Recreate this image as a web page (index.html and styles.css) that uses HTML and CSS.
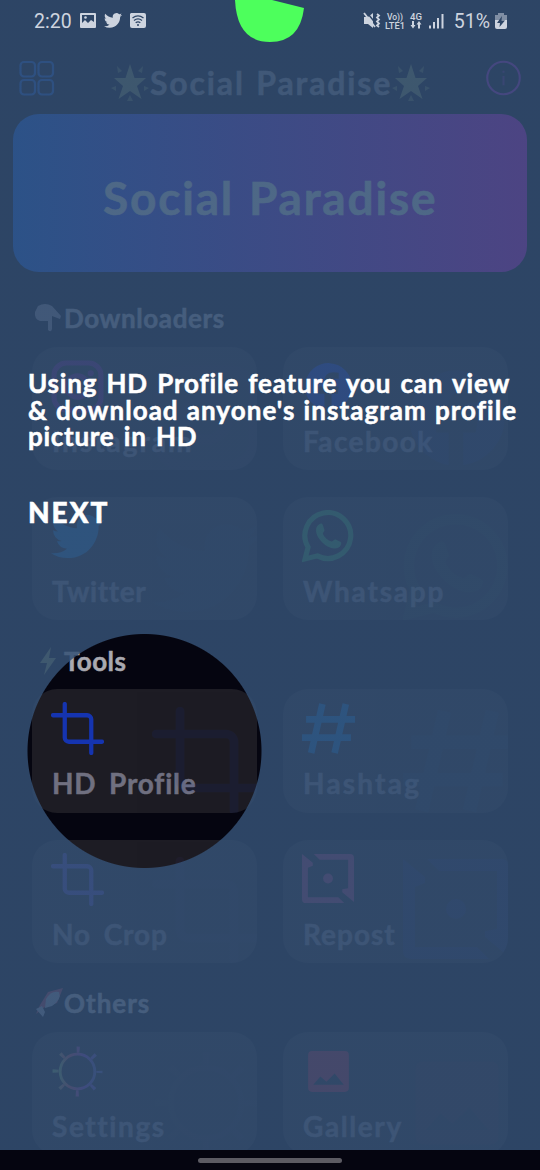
FILE: index.html
```html
<!DOCTYPE html>
<html lang="en">
<head>
<meta charset="utf-8">
<title>Social Paradise</title>
<link rel="stylesheet" href="styles.css">
</head>
<body>
<svg class="defs" width="0" height="0">
  <defs>
    <linearGradient id="rainbow" x1="0" x2="1"><stop offset="0" stop-color="#6e9e60"/><stop offset=".25" stop-color="#b04050"/><stop offset=".7" stop-color="#7830b8"/><stop offset="1" stop-color="#5050a0"/></linearGradient>
    <symbol id="crop" viewBox="0 0 52 52"><path d="M13.500 2V35a4 4 0 0 0 4 4H50M2 13H35.500a4 4 0 0 1 4 4V50" fill="none" stroke="currentColor" stroke-width="4.200" stroke-linecap="round"/></symbol>
    <symbol id="insta" viewBox="0 0 52 52"><g fill="none" stroke="currentColor" stroke-width="5"><rect x="3" y="3" width="46" height="46" rx="12"/><circle cx="26" cy="26" r="10.500"/></g><circle cx="39" cy="13" r="3" fill="currentColor"/></symbol>
    <symbol id="fb" viewBox="0 0 52 52"><path fill="currentColor" d="M49 26a23 23 0 1 0-27 22.700V33h-6v-7h6v-5c0-6 3.500-9 9-9l5 .5v6h-3c-3 0-4 1.500-4 4V26h7l-1 7h-6v15.700A23 23 0 0 0 49 26Z"/></symbol>
    <symbol id="bird" viewBox="0 0 24 24"><path fill="currentColor" d="M23.953 4.57a10 10 0 01-2.825.775 4.958 4.958 0 002.163-2.723c-.951.555-2.005.959-3.127 1.184a4.92 4.92 0 00-8.384 4.482C7.69 8.095 4.067 6.13 1.64 3.162a4.822 4.822 0 00-.666 2.475c0 1.71.87 3.213 2.188 4.096a4.904 4.904 0 01-2.228-.616v.06a4.923 4.923 0 003.946 4.827 4.996 4.996 0 01-2.212.085 4.936 4.936 0 004.604 3.417 9.867 9.867 0 01-6.102 2.105c-.39 0-.779-.023-1.17-.067a13.995 13.995 0 007.557 2.209c9.053 0 13.998-7.496 13.998-13.985 0-.21 0-.42-.015-.63A9.935 9.935 0 0024 4.59z"/></symbol>
    <symbol id="wa" viewBox="0 0 52 52"><path d="M3 48L6 36.500A22.500 22.500 0 1 1 15 45Z" fill="none" stroke="currentColor" stroke-width="5"/><path fill="currentColor" d="M17 14c1.500-1.500 3-1 3.500 1l1.500 4.500c.5 1.500-2 2.500-1.500 4 1.500 3.500 5 6.500 8.500 7.500 1.500 0 2.500-2.500 4-2l5 2.500c1.500 1-.5 5-2.500 5.500-5 2-11-.5-15.500-5-4.500-4.500-7-9.500-6-14 .5-2 1.500-3 3-4Z"/></symbol>
    <symbol id="hash" viewBox="0 0 52 52"><path d="M20 2 9 50M43 2 32 50M4 17H52M0 35H48" fill="none" stroke="currentColor" stroke-width="6.500"/></symbol>
    <symbol id="repost" viewBox="0 0 54 52"><path fill="currentColor" d="M0 0 11 9V12L6 14V44H37L43 50H4Q0 50 0 46ZM12 0H49Q53 0 53 4V49L41 39V36L47 35V6H18Z"/><circle cx="26.500" cy="25" r="5" fill="currentColor"/></symbol>
    <symbol id="gear" viewBox="0 0 52 52"><g fill="none" stroke="url(#rainbow)"><circle cx="26" cy="26" r="17" stroke-width="2.800"/><circle cx="26" cy="26" r="21.500" stroke-width="6" stroke-dasharray="3 13.886" stroke-dashoffset="1.500"/></g></symbol>
    <symbol id="photo" viewBox="0 0 52 52"><path fill="currentColor" fill-rule="evenodd" d="M10 6H42Q46 6 46 10V42Q46 46 42 46H10Q6 46 6 42V10Q6 6 10 6ZM11 39H41L32 28L24 36L18 31Z"/></symbol>
    <symbol id="star" viewBox="0 0 38 38"><g fill="currentColor"><path d="M19 0 23.500 14H35L26 22 30.500 35 19 27 7.500 35 12 22 3 14H14.500Z"/><path opacity=".7" d="M6 2 11 7 7 9ZM32 2 27 7 31 9ZM0 24 5 22 5 27ZM38 24 33 22 33 27ZM19 31 22 37H16Z"/></g></symbol>
  </defs>
</svg>
<div class="screen">
  <header class="appbar">
    <svg class="menu" viewBox="0 0 36 36"><g fill="none" stroke="currentColor" stroke-width="2.200"><rect x="1.500" y="2" width="14.500" height="14.500" rx="3.500"/><rect x="19.500" y="2" width="14.500" height="14.500" rx="3.500"/><rect x="1.500" y="20" width="14.500" height="14.500" rx="3.500"/><rect x="19.500" y="20" width="14.500" height="14.500" rx="3.500"/></g></svg>
    <div class="brand"><svg><use href="#star"/></svg><span>Social Paradise</span><svg><use href="#star"/></svg></div>
    <svg class="info" viewBox="0 0 34 34"><g fill="none" stroke="currentColor" stroke-width="2"><circle cx="17" cy="17" r="15.800"/><path d="M17 15V24M17 10V12" opacity=".5"/></g></svg>
  </header>
  <section class="banner"><span>Social Paradise</span></section>
  <h2 class="title down"><svg viewBox="0 0 26 28"><path fill="#8a8490" d="M3 2Q10-2 17 2L26 12 25 15 17 12V25Q16 29 13 26V17H5Q-1 15 0 8Z"/></svg><span>Downloaders</span></h2>
  <div class="grid">
    <article class="card insta"><svg class="icon"><use href="#insta"/></svg><span class="label">Instagram</span><svg class="mark"><use href="#insta"/></svg></article>
    <article class="card fb"><svg class="icon"><use href="#fb"/></svg><span class="label">Facebook</span><svg class="mark"><use href="#fb"/></svg></article>
    <article class="card bird"><svg class="icon"><use href="#bird"/></svg><span class="label">Twitter</span><svg class="mark"><use href="#bird"/></svg></article>
    <article class="card wa"><svg class="icon"><use href="#wa"/></svg><span class="label">Whatsapp</span><svg class="mark"><use href="#wa"/></svg></article>
  </div>
  <h2 class="title tools"><svg viewBox="0 0 26 28"><path fill="#7b8752" d="M16 0 5 16H12L9 28 21 11H14Z"/></svg><span>Tools</span></h2>
  <div class="grid">
    <article class="card hd"><svg class="icon"><use href="#crop"/></svg><span class="label">HD Profile</span><svg class="mark"><use href="#crop"/></svg></article>
    <article class="card hash"><svg class="icon"><use href="#hash"/></svg><span class="label">Hashtag</span><svg class="mark"><use href="#hash"/></svg></article>
    <article class="card nocrop"><svg class="icon"><use href="#crop"/></svg><span class="label">No Crop</span><svg class="mark"><use href="#crop"/></svg></article>
    <article class="card repost"><svg class="icon"><use href="#repost"/></svg><span class="label">Repost</span><svg class="mark"><use href="#repost"/></svg></article>
  </div>
  <h2 class="title others"><svg viewBox="0 0 26 28"><path fill="#a03048" d="M13 3 28-1 22 14 10 18 1 25 5 16Z"/><path fill="#8e96a8" d="M11 10Q16 1 24 3 27 10 17 17L10 19ZM1 20 7 17 10 23 8 28Z"/></svg><span>Others</span></h2>
  <div class="grid">
    <article class="card gear"><svg class="icon"><use href="#gear"/></svg><span class="label">Settings</span><svg class="mark"><use href="#gear"/></svg></article>
    <article class="card photo"><svg class="icon"><use href="#photo"/></svg><span class="label">Gallery</span><svg class="mark"><use href="#photo"/></svg></article>
  </div>
  <div class="spotlight"></div>
  <div class="coach">
    <p><span class="l1">Using HD Profile feature you can view</span><span class="l2">&amp; download anyone's instagram profile</span><span class="l3">picture in HD</span></p>
    <b class="next">NEXT</b>
  </div>
  <div class="status">
    <span class="clock">2:20</span>
    <svg class="s-left" viewBox="0 0 70 18"><path fill="currentColor" fill-rule="evenodd" d="M1 1H15Q16 1 16 2V15Q16 16 15 16H1Q0 16 0 15V2Q0 1 1 1ZM2 3V11L5 8 8 11 11 8 14 10V3ZM51 1H64Q66 1 66 3V14Q66 16 64 16H52Q50 16 50 14V2Z"/><circle cx="5.500" cy="5.500" r="1.300" fill="currentColor"/><svg x="24" y="-.5" width="18" height="18"><use href="#bird"/></svg><g fill="none" stroke="#2d4565" stroke-width="1.300"><path d="M52.500 6Q58 1.800 63.500 6M54 8.500Q58 5.200 62 8.500M55.700 10.800Q58 9 60.300 10.800"/></g><circle cx="58" cy="13" r="1" fill="#2d4565"/></svg>
    <svg class="s-right" viewBox="0 0 82 20"><path fill="currentColor" d="M1 6H5L10 2V17L5 13H1Z"/><path d="M3.500 1 14 14" stroke="#2d4565" stroke-width="1.500"/><path d="M1 2 12 16" stroke="currentColor" stroke-width="1.800"/><path d="M14 3l2 1.500-2 2 2 2-2 2 2 2-2 2 2 1.500" stroke="currentColor" stroke-width="1.800" fill="none"/><g fill="currentColor"><text x="24" y="8.500" textLength="16" lengthAdjust="spacingAndGlyphs">Vo))</text><text x="22" y="17.500" textLength="20" lengthAdjust="spacingAndGlyphs">LTE1</text><text x="47" y="8.500" textLength="12" lengthAdjust="spacingAndGlyphs">4G</text><path d="M49 10h2v4h1.500L50 17.500 47.500 14H49ZM55 17.500h2v-4h1.500L56 10 53.500 13.500H55ZM66 14.500h2v3h-2ZM70 11h2v6.500h-2ZM74 7h2v10.500h-2ZM78.500 3h2v14.500h-2Z"/></g></svg>
    <span class="pct">51%</span>
    <svg class="batt" viewBox="0 0 12 18"><path fill="#7f8ea4" d="M3 1H9V3H12V9H0V3H3Z"/><path fill="currentColor" d="M0 8H12V15Q12 17 10 17H2Q0 17 0 15Z"/><path fill="#2d4565" d="M7 4 2 11H5L4.500 15 10 8.500H6.500Z"/></svg>
  </div>
  <svg class="blob" viewBox="0 0 70 43"><path fill="#4dff5c" d="M0 0H37L69 8Q65 42 35 42 2 42 0 0Z"/></svg>
  <footer class="navbar"><i></i></footer>
</div>
</body>
</html>
```
FILE: styles.css
```css
* { box-sizing: border-box; }
body { margin: 0; background: #050510; font-family: Lato, "Open Sans", sans-serif; font-weight: 700; }
svg { display: block; flex: none; }
.defs { position: absolute; }
.screen { position: relative; width: 540px; height: 1170px; overflow: hidden; background: #050510; color: #a9a9b0; }
.brand span, .banner span, .title span, .label, .coach { -webkit-text-stroke: .5px currentColor; }
.appbar { height: 114px; padding: 60px 19px 0; display: flex; justify-content: space-between; align-items: flex-start; }
.menu { width: 36px; height: 36px; color: #0c50c8; }
.info { width: 35px; height: 36px; color: #a414c0; }
.brand { display: flex; align-items: center; gap: 1px; height: 46px; font-size: 32px; color: #85858d; letter-spacing: 1.850px; word-spacing: 2px; }
.brand svg { width: 38px; height: 38px; color: #74804c; }
.brand span { width: 241px; white-space: nowrap; line-height: 38px; padding-bottom: 1px; }
.banner { margin: 0 13px; height: 158px; border-radius: 26px; background: linear-gradient(90deg, #005df5, #d800d8); display: flex; align-items: center; justify-content: center; color: #e0f0f0; font-size: 46px; padding-top: 8px; letter-spacing: 1.800px; word-spacing: 2px; }
.banner span { width: 334px; white-space: nowrap; }
.title { margin: 0; padding-left: 35px; height: 75px; display: flex; align-items: center; padding-top: 16px; gap: 3px; font-size: 26px; }
.title svg { width: 26px; height: 28px; overflow: visible; }
.title.down { letter-spacing: .6px; }
.title.tools { height: 69px; padding-top: 12px; letter-spacing: .4px; }
.title.others { height: 69.500px; padding-top: 11px; letter-spacing: 1px; }
.grid { display: grid; grid-template-columns: 225px 225px; gap: 27px 26px; padding-left: 32px; }
.card { position: relative; height: 123.200px; border-radius: 25px; overflow: hidden; background: #1d1c24; padding: 13px 0 0 19px; display: flex; flex-direction: column; gap: 11px; }
.icon { width: 53px; height: 53px; }
.label { font-size: 28px; line-height: 34px; color: #707080; padding-left: 1px; white-space: nowrap; }
.mark { position: absolute; right: -3px; bottom: -2px; width: 108px; height: 108px; opacity: .09; }
.insta { color: #601078; }
.insta .label { letter-spacing: 2px; }
.insta .mark { opacity: .04; }
.fb { color: #1030c0; }
.fb .label { letter-spacing: 1.400px; }
.fb .mark { opacity: .15; }
.bird { color: #1268b0; }
.bird .label { letter-spacing: .6px; }
.bird .mark { opacity: .05; }
.wa { color: #2e9550; }
.wa .label { letter-spacing: 1.800px; }
.hd { color: #1534b0; }
.hd .label { letter-spacing: .8px; word-spacing: 5px; }
.hash { color: #0768b8; }
.hash .label { letter-spacing: 2.200px; }
.nocrop { color: #4a40ad; }
.nocrop .label { letter-spacing: .9px; word-spacing: 5px; }
.nocrop .mark { opacity: .05; }
.repost { color: #983468; }
.repost .label { letter-spacing: 1px; }
.repost .mark { color: #1534e0; opacity: .15; }
.gear .label { letter-spacing: 1.600px; }
.gear .mark { opacity: .04; }
.photo { color: #a01c34; }
.photo .label { letter-spacing: 1.600px; }
.spotlight { position: absolute; inset: 0 0 20px; background: radial-gradient(circle at 144.500px 751px, transparent 116.500px, rgba(52, 80, 116, .85) 117.500px); }
.coach { position: absolute; left: 28px; top: 370px; color: #fff; }
.coach p { margin: 0; font-size: 26px; line-height: 26.500px; }
.coach p span { display: block; white-space: nowrap; }
.l1 { letter-spacing: .8px; word-spacing: 2.200px; }
.l2 { letter-spacing: 1.050px; word-spacing: .7px; }
.l3 { letter-spacing: .7px; word-spacing: 2.500px; }
.next { display: block; margin-top: 45px; font-size: 28px; line-height: 34px; letter-spacing: 1.900px; }
.status { position: absolute; inset: 0 0 auto; height: 42px; display: flex; align-items: center; padding: 0 33px 0 34px; color: #cdd4df; font: 400 19.500px Roboto, sans-serif; }
.s-left { width: 70px; height: 18px; margin-left: 8px; }
.s-right { width: 82px; height: 20px; margin-left: auto; font: 500 9px Roboto, sans-serif; }
.pct { margin-left: 9px; }
.batt { width: 12px; height: 18px; margin-left: 5px; }
.blob { position: absolute; left: 235px; top: 0; width: 70px; height: 43px; }
.navbar { position: absolute; inset: auto 0 0; height: 20px; background: #050510; display: flex; justify-content: center; padding-top: 8px; }
.navbar i { width: 144px; height: 5px; border-radius: 3px; background: #5c5b63; }
```
